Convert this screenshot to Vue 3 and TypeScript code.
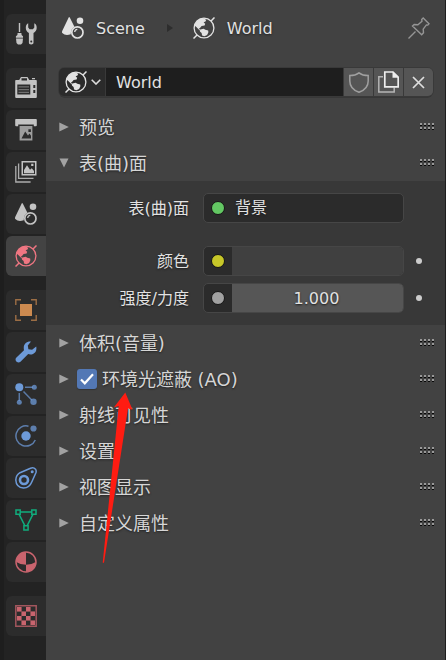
<script setup lang="ts">
import { ref } from 'vue'

interface Tab {
  icon: string
  color: string
  gap?: boolean
}

interface Panel {
  title: string
  checkbox?: boolean
  open?: boolean
}

const tabs: Tab[] = [
  { icon: 'tool', color: '#c3c3c3', gap: true },
  { icon: 'render', color: '#c3c3c3' },
  { icon: 'output', color: '#c3c3c3' },
  { icon: 'layers', color: '#c3c3c3' },
  { icon: 'scene', color: '#c3c3c3' },
  { icon: 'world', color: '#ef7682', gap: true },
  { icon: 'object', color: '#cc8a50' },
  { icon: 'modifier', color: '#6d9ad8' },
  { icon: 'particles', color: '#6d9ad8' },
  { icon: 'physics', color: '#6d9ad8' },
  { icon: 'constraint', color: '#6d9ad8' },
  { icon: 'mesh', color: '#10ac7c' },
  { icon: 'material', color: '#c9646e', gap: true },
  { icon: 'texture', color: '#c9646e' },
]

const panels = ref<Panel[]>([
  { title: '预览' },
  { title: '表(曲)面', open: true },
  { title: '体积(音量)' },
  { title: '环境光遮蔽 (AO)', checkbox: true },
  { title: '射线可见性' },
  { title: '设置' },
  { title: '视图显示' },
  { title: '自定义属性' },
])

const active = ref('world')
const dots = [0, 4, 8, 12]
</script>

<template>
  <div class="editor">
    <svg class="defs" width="0" height="0">
      <symbol id="i-tool" viewBox="0 0 22 22">
        <path fill="currentColor" d="M3.8 0h1.4v9H3.8zM2.6 10h3.8l.2 2 1.4 1.2v1.5H.9v-1.5L2.4 12zM1 15.5h7l-.5 4.5-1.5 1.4H3L1.5 20z" />
        <path fill="currentColor" d="M13.2.2v4.3l1.4 1.700h3.300l1.400-1.700V.2c1.700.8 2.400 2.400 2.400 4.600 0 2.500-1.100 4-3.200 5.200v9.700c0 1-.9 1.700-2.300 1.700-1.500 0-2.300-.7-2.300-1.700V10c-2.100-1.200-3.100-2.800-3.100-5.200 0-2.200.7-3.800 2.400-4.600zM16.200 17.500a1 1 0 1 0 .1 2 1 1 0 0 0-.1-2z" fill-rule="evenodd" />
      </symbol>
      <symbol id="i-render" viewBox="0 0 22 22">
        <path fill="currentColor" fill-rule="evenodd" d="M1 3h3.200L6 0h6.500l1.800 3H21q.8 0 .8.800V20q0 1-1 1H1.200q-1 0-1-1V3.800Q.2 3 1 3zM6.500 1.200v2.200h5.500V1.200zM2.300 7.500v10h13v-10zM18.300 8v3h2V8zm0 5v3h2v-3zM17 1h3v1.300h-3z" />
        <path stroke="currentColor" stroke-opacity=".45" stroke-width="1.2" d="M3.500 9.800h10.500M3.500 12.600h10.500M3.500 15.400h10.500" />
      </symbol>
      <symbol id="i-output" viewBox="0 0 22 22">
        <path fill="currentColor" d="M1 0h20q.8 0 .8.800v5.400q0 1-1 1h-2V5.600H3.200v1.600h-2q-1 0-1-1V.8Q.2 0 1 0z" />
        <path fill="currentColor" opacity=".75" fill-rule="evenodd" d="M4.600 7h12.800v14.600H4.600zM6.500 19.400h9.500v-2.600l-1.500-2.200-1.500 1.900-2.800-4zM13.400 10.200v2.700h2.500v-2.700z" />
      </symbol>
      <symbol id="i-layers" viewBox="0 0 22 22">
        <path fill="currentColor" fill-rule="evenodd" d="M6.500 0h15v14.500h-15zM8 1.500V13h12V1.500zM9 12.200V9l3-4.800 3 4.500 1.800-1.400L19 10v2.200zM16.200 2.800h2.200V5h-2.200z" />
        <path fill="none" stroke="currentColor" stroke-opacity=".85" stroke-width="1.3" d="M3.600 2.500V17.400H18.500M.8 5V21H15.600" />
      </symbol>
      <symbol id="i-scene" viewBox="0 0 22 22">
        <path fill="currentColor" d="M6.800.2q.6-.3 1.100.5l4.500 9q-3.800 2.200-3.600 7.600-5.400 2-8.500-1.200-.5-.7-.1-2z" />
        <circle cx="18" cy="3.800" r="3.300" fill="currentColor" />
        <circle cx="15.400" cy="15.400" r="5.600" fill="none" stroke="currentColor" stroke-width="1.700" />
        <path fill="none" stroke="currentColor" stroke-width="1.300" d="M12.700 15q.2-2.300 2.600-2.600" />
      </symbol>
      <symbol id="i-world" viewBox="0 0 22 22">
        <circle cx="11" cy="11" r="9.900" fill="none" stroke="currentColor" stroke-width="1.300" />
        <path fill="none" stroke="currentColor" stroke-width="1.500" d="M.5 21.500l3.800-3.800M17.800 4.200L21.500.5" />
        <path fill="currentColor" d="M1.600 8.500Q3.500 2.500 9 1.300l3.200.2.900 2.600-2.500 1.300 1.600 1.400-.6 1.700-3 .6-1.600 1.800-1.200.9 1.700 1.200-.7.500L3.300 10zM7.300 12.400l3.400-.6 1.600 1 2.900.8.200 1.700-1.300 2.600-2.700 1.300-2.300-.6-.5-2.700-1.700-1.500z" />
      </symbol>
      <symbol id="i-object" viewBox="0 0 22 22">
        <path fill="currentColor" d="M5 5h12v12H5z" />
        <path fill="none" stroke="currentColor" stroke-opacity=".7" stroke-width="1.400" d="M.8 6V.8H6M16 .8h5.200V6M21.200 16v5.200H16M6 21.200H.8V16" />
      </symbol>
      <symbol id="i-modifier" viewBox="0 0 22 22">
        <path fill="currentColor" d="M16 .6L12.800 4.600l.6 3.700 3.700.4L21.200 5.500c.8 3.500-.6 6.300-3.200 7.400-1.600.7-3.400.7-4.800.1L5.500 20.700q-1.900 1.400-3.900 0-1.900-2.100-.4-4L9 9.200C7.800 4 11 .200 16 .6z" />
      </symbol>
      <symbol id="i-particles" viewBox="0 0 22 22">
        <g fill="currentColor">
          <circle cx="4.300" cy="4.300" r="4" />
          <g opacity=".75">
            <circle cx="19.300" cy="4.300" r="2.500" />
            <circle cx="4.300" cy="19.300" r="2.500" />
            <circle cx="18.500" cy="18.700" r="3.200" />
          </g>
        </g>
        <path stroke="currentColor" stroke-opacity=".7" stroke-width="1.500" d="M10 4.300h8M4.300 10v8M8.500 8.500l8.500 8.700" />
      </symbol>
      <symbol id="i-physics" viewBox="0 0 22 22">
        <circle cx="11" cy="11" r="4.700" fill="currentColor" />
        <circle cx="18.500" cy="3.500" r="3.100" fill="currentColor" opacity=".75" />
        <path fill="none" stroke="currentColor" stroke-opacity=".75" stroke-width="1.500" d="M13.500 1.200A10.100 10.100 0 1 0 20.300 15" />
      </symbol>
      <symbol id="i-constraint" viewBox="0 0 22 22">
        <path fill="none" stroke="currentColor" stroke-width="1.500" d="M5 5.700L15.500 1.300Q18.500 0 20.500 2.200 21.500 3.700 21 5.500L17 14.500Q14.500 21 8.500 21 1.200 20.500.8 13 1 8 5 5.700z" />
        <circle cx="9" cy="13" r="4" fill="none" stroke="currentColor" stroke-width="2.600" />
        <circle cx="17.200" cy="4.800" r="1.500" fill="currentColor" />
      </symbol>
      <symbol id="i-mesh" viewBox="0 0 22 22">
        <path fill="none" stroke="currentColor" stroke-width="1.500" d="M1 1h4.200v4.200H1zM16.800 1H21v4.200h-4.200zM8.900 16.700h4.200v4.200H8.900zM5.200 3h11.600M4 5.200l5.800 11.500M18 5.200l-5.800 11.500" />
      </symbol>
      <symbol id="i-material" viewBox="0 0 22 22">
        <circle cx="11" cy="11" r="10" fill="none" stroke="currentColor" stroke-width="1.500" />
        <path fill="currentColor" d="M11 1v12.800Q5 13.600 1.200 11 1.500 2 11 1zM11 13.800q6-.2 9.800-2.800Q20.500 20 11 21z" />
      </symbol>
      <symbol id="i-texture" viewBox="0 0 22 22">
        <path fill="none" stroke="currentColor" stroke-opacity=".75" stroke-width="1.500" d="M.8.8h20.400v20.400H.8z" />
        <path fill="currentColor" opacity=".3" d="M2 2h18v18H2z" />
        <path fill="#2c2c2c" d="M6.500 2H11v4.500H6.500zM15.500 2H20v4.500h-4.500zM2 6.500h4.500V11H2zM11 6.500h4.500V11H11zM6.500 11H11v4.500H6.500zM15.500 11H20v4.500h-4.500zM2 15.500h4.500V20H2zM11 15.500h4.500V20H11z" />
        <path fill="currentColor" d="M2 2h4.500v4.500H2zM11 2h4.500v4.500H11zM6.500 6.500H11V11H6.500zM15.500 6.500H20V11h-4.500zM2 11h4.500v4.500H2zM11 11h4.500v4.500H11zM6.500 15.500H11V20H6.500zM15.500 15.500H20V20h-4.500z" />
      </symbol>
    </svg>

    <nav class="tabs">
      <button
        v-for="tab in tabs"
        :key="tab.icon"
        class="tab"
        :class="{ active: tab.icon === active, gap: tab.gap }"
        :style="{ color: tab.color }"
        @click="active = tab.icon"
      >
        <svg width="22" height="22"><use :href="'#i-' + tab.icon" /></svg>
      </button>
    </nav>

    <main class="content">
      <header class="crumbs">
        <svg width="22" height="22"><use href="#i-scene" /></svg>
        <span class="crumb">Scene</span>
        <svg class="sep" width="6" height="10" viewBox="0 0 6 10"><path d="M0 1l6 4-6 4z" fill="#2d2d2d" /></svg>
        <svg width="22" height="22"><use href="#i-world" /></svg>
        <span class="crumb">World</span>
        <svg class="pin" width="22" height="22" viewBox="0 0 22 22" fill="none" stroke="#959595" stroke-width="1.400">
          <path d="M.5 21.500l7-7M15.200 1l5.800 5.800-1.200 1.300-1.400-.2-3.200 4.300.3 3.500-1.800 2L4.500 9l1.700-1.500 3.700.3L14 4.200l-.3-1.700z" />
        </svg>
      </header>

      <div class="idblock">
        <button class="browse">
          <svg width="22" height="22"><use href="#i-world" /></svg>
          <svg width="10" height="6" viewBox="0 0 10 6"><path d="M.7.7L5 5 9.300.7" fill="none" stroke="#dcdcdc" stroke-width="1.600" /></svg>
        </button>
        <div class="name">World</div>
        <button class="idbtn">
          <svg width="20" height="21" viewBox="0 0 20 21"><path d="M10 .8Q13.500 3.500 19.200 3.500V9q0 8-9.200 11.300Q.8 17 .8 9V3.500Q6.500 3.500 10 .8z" fill="none" stroke="#a0a0a0" stroke-width="1.500" /></svg>
        </button>
        <button class="idbtn">
          <svg width="21" height="22" viewBox="0 0 21 22">
            <path d="M5 5.700H.8V21h15.400v-4.500" fill="none" stroke="#b5b5b5" stroke-width="1.500" />
            <path d="M6.800 1h8.200l5.200 5.200v9.600H6.800z" fill="none" stroke="#eee" stroke-width="1.700" />
            <path d="M14.500.5v6.300h6.300z" fill="#eee" />
          </svg>
        </button>
        <button class="idbtn last">
          <svg width="13" height="13" viewBox="0 0 13 13"><path d="M1 1l11 11M12 1L1 12" stroke="#dedede" stroke-width="1.700" /></svg>
        </button>
      </div>

      <section v-for="panel in panels" :key="panel.title">
        <div class="head">
          <svg class="arrow" width="10" height="10" viewBox="0 0 10 10">
            <path :d="panel.open ? 'M.5 .5h9L5 9.500z' : 'M.3 .5L9.800 5 .3 9.500z'" fill="#a2a2a2" />
          </svg>
          <span v-if="panel.checkbox" class="check">
            <svg width="14" height="12" viewBox="0 0 14 12"><path d="M1 6.500l3.800 3.800L13 1.200" fill="none" stroke="#fff" stroke-width="2.200" /></svg>
          </span>
          <span class="title">{{ panel.title }}</span>
          <svg class="grip" width="14" height="7">
            <g v-for="x in dots" :key="x">
              <rect :x="x" y="0" width="2" height="2" fill="#999" />
              <rect :x="x" y="2" width="2" height="1" fill="#080808" />
              <rect :x="x" y="4" width="2" height="2" fill="#999" />
              <rect :x="x" y="6" width="2" height="1" fill="#080808" />
            </g>
          </svg>
        </div>
        <div v-if="panel.open" class="body">
          <div class="row first">
            <label>表(曲)面</label>
            <div class="field menu"><i class="socket green"></i><span>背景</span></div>
          </div>
          <div class="row">
            <label>颜色</label>
            <div class="field"><span class="cell"><i class="socket yellow"></i></span><span class="swatch"></span></div>
            <i class="key"></i>
          </div>
          <div class="row">
            <label>强度/力度</label>
            <div class="field"><span class="cell"><i class="socket gray"></i></span><span class="number">1.000</span></div>
            <i class="key"></i>
          </div>
        </div>
      </section>
    </main>

    <svg class="red-arrow" width="32" height="172" viewBox="0 0 32 172">
      <path d="M23.300.5L30.500 17.800 26 16.500 2 170.700H.7L16.700 14 11.800 15.400z" fill="#ff1c12" />
    </svg>
  </div>
</template>

<style>
body {
  background: #424242;
}
</style>

<style scoped>
.editor {
  position: relative;
  display: flex;
  width: 446px;
  height: 660px;
  overflow: hidden;
  background: #232323;
  color: #e2e2e2;
  font-family: 'DejaVu Sans', 'Noto Sans CJK SC', sans-serif;
  font-size: 16px;
}
.defs {
  position: absolute;
}
svg {
  display: block;
  flex: none;
}
button {
  margin: 0;
  padding: 0;
  border: 0;
}
.tabs {
  box-sizing: border-box;
  display: flex;
  flex-direction: column;
  gap: 2px;
  width: 46px;
  padding: 14px 0 0 2px;
  border-left: 4px solid #1e1e1e;
}
.tab {
  flex: none;
  display: flex;
  align-items: center;
  height: 40px;
  padding-left: 9px;
  border-radius: 6px 0 0 6px;
  background: #2c2c2c;
}
.tab.gap {
  margin-bottom: 12px;
}
.tab.active {
  background: #434343;
}
.content {
  flex: 1;
  min-width: 0;
  box-sizing: border-box;
  border-right: 1px solid #1e1e1e;
  background: #424242;
}
.crumbs {
  display: flex;
  align-items: center;
  height: 56px;
  padding: 0 15px 0 16px;
  text-shadow: 0 1px 2px #222;
}
.crumb {
  margin-left: 12px;
}
.sep {
  margin: 0 20px 0 22px;
}
.pin {
  margin-left: auto;
}
.idblock {
  display: flex;
  gap: 1px;
  height: 28px;
  margin: 12px 12px 13px 13px;
  border-radius: 6px;
  background: #393939;
  box-shadow: 0 0 0 1px #393939, 0 2px 0 #373737;
}
.browse {
  display: flex;
  align-items: center;
  gap: 4px;
  width: 46px;
  padding-left: 6px;
  border-radius: 5px 0 0 5px;
  background: #2b2b2b;
  color: #e2e2e2;
}
.name {
  flex: 1;
  padding-left: 10px;
  background: #1e1e1e;
  line-height: 29px;
}
.idbtn {
  display: flex;
  align-items: center;
  justify-content: center;
  width: 29px;
  background: #555;
}
.idbtn.last {
  border-radius: 0 5px 5px 0;
}
.head {
  display: flex;
  align-items: center;
  height: 36px;
  padding: 0 11px 0 13px;
  color: #d6d6d6;
  font-size: 18px;
  line-height: 36px;
  text-shadow: 0 1px 2px #222;
}
.title {
  margin-left: 10px;
  padding-top: 2px;
  line-height: 34px;
  letter-spacing: -0.03px;
  white-space: nowrap;
}
.check {
  display: flex;
  align-items: center;
  justify-content: center;
  width: 20px;
  height: 20px;
  margin-left: 8px;
  border-radius: 3px;
  background: #5378b5;
  box-shadow: 0 1px 1px #333;
}
.check + .title {
  margin-left: 5px;
}
.grip {
  margin: -2px 0 0 auto;
}
.body {
  box-sizing: border-box;
  display: flex;
  flex-direction: column;
  gap: 7px;
  height: 144px;
  padding-top: 12px;
  background: #383838;
}
.row {
  display: flex;
  align-items: center;
  height: 30px;
  text-shadow: 0 1px 2px #1a1a1a;
}
.row.first {
  margin-bottom: 16px;
}
label {
  width: 143px;
  padding-top: 2px;
  text-align: right;
  line-height: 28px;
}
.field {
  box-sizing: border-box;
  display: flex;
  width: 201px;
  height: 30px;
  margin-left: 14px;
  overflow: hidden;
  border: 1px solid #464646;
  border-radius: 5px;
  background: #2b2b2b;
  line-height: 28px;
}
.menu {
  align-items: center;
  gap: 11px;
  padding-left: 8px;
}
.cell {
  display: flex;
  align-items: center;
  width: 20px;
  padding-left: 8px;
}
.socket {
  width: 12px;
  height: 12px;
  margin: 0 -1px;
  border: 1px solid #151515;
  border-radius: 50%;
}
.green {
  background: #63c763;
}
.yellow {
  background: #c7c729;
}
.gray {
  background: #a1a1a1;
}
.swatch {
  flex: 1;
  background: #404040;
}
.number {
  flex: 1;
  padding-right: 2px;
  background: #565656;
  line-height: 29px;
  text-align: center;
}
.key {
  width: 6px;
  height: 6px;
  margin-left: 12px;
  border-radius: 50%;
  background: #ccc;
}
.red-arrow {
  position: absolute;
  left: 102px;
  top: 392px;
}
</style>
